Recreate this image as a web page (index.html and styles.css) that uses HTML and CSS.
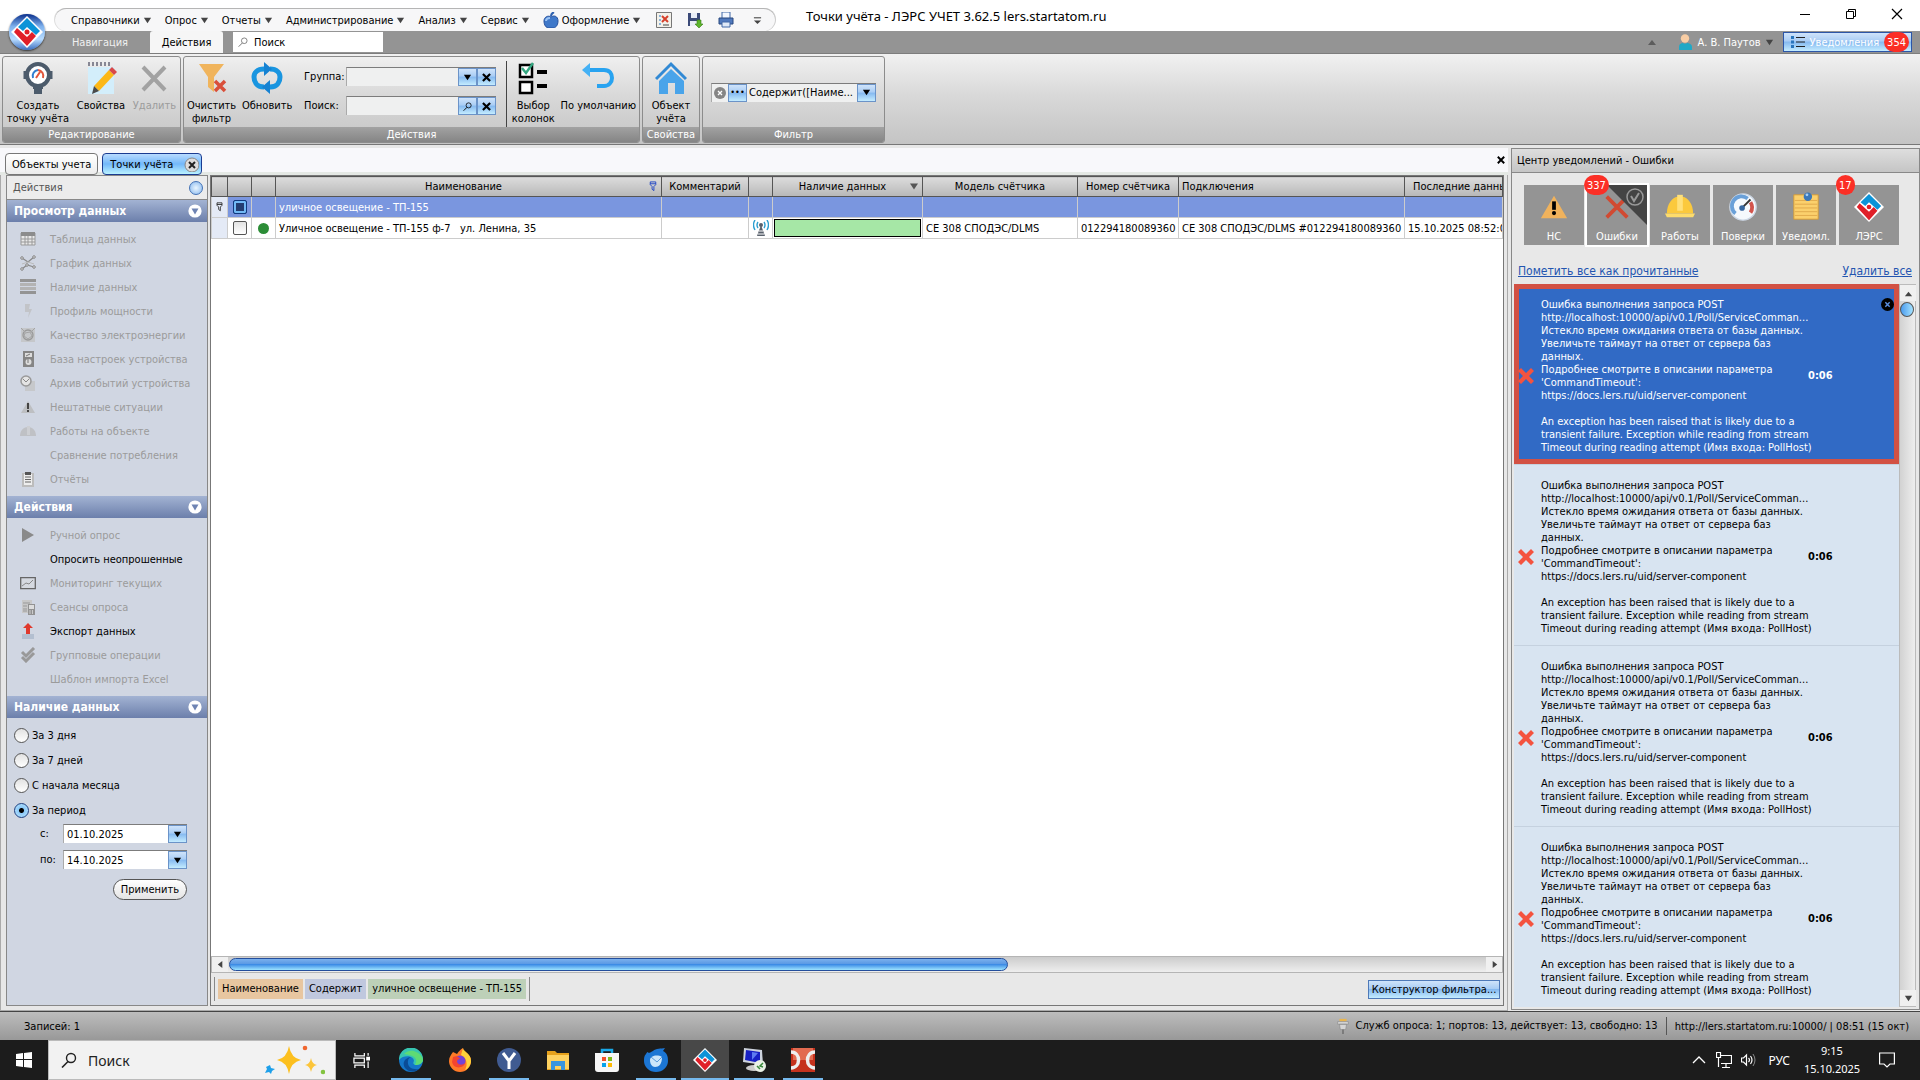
FILE: index.html
```html
<!DOCTYPE html>
<html lang="ru">
<head>
  <meta charset="UTF-8">
  <meta name="viewport" content="width=device-width, initial-scale=1.0">
  <title>Точки учёта - ЛЭРС УЧЕТ</title>
  <link rel="stylesheet" href="styles.css">
</head>
<body>
  <!-- Shared icons -->
  <svg class="defs" aria-hidden="true">
    <symbol id="i-lers" viewBox="0 0 32 32">
      <path d="M16 0 32 16 16 32 0 16z" fill="#fff"/>
      <path d="M16 2 29 15l-4 4-9-8-4 4-5-4z" fill="#0b93d8"/>
      <path d="M6 12l10 9 5-5 4 4-9 10L3 16z" fill="#e01f28"/>
      <circle cx="16" cy="16" r="2.500" fill="#e01f28"/>
    </symbol>
    <symbol id="i-cross" viewBox="0 0 16 16">
      <path d="M3 0l5 5 5-5 3 3-5 5 5 5-3 3-5-5-5 5-3-3 5-5-5-5z" fill="#f4533f"/>
    </symbol>
    <symbol id="i-x" viewBox="0 0 10 10"><path d="M1 1l8 8M9 1l-8 8" stroke="#000" stroke-width="2.400"/></symbol>
    <symbol id="i-down" viewBox="0 0 10 10"><path d="M1 2h8L5 8z" fill="currentColor"/></symbol>
    <symbol id="i-find" viewBox="0 0 16 16">
      <circle cx="10" cy="6" r="4.500" fill="none" stroke="currentColor" stroke-width="1.400"/>
      <path d="M7 9.500 1 15.500" stroke="currentColor" stroke-width="1.600"/>
    </symbol>
    <symbol id="i-fold" viewBox="0 0 14 14">
      <circle cx="7" cy="7" r="6.600" fill="#fff"/><path d="M3.500 4.500h7L7 10.500z" fill="#6f84b3"/>
    </symbol>
    <symbol id="i-pin" viewBox="0 0 8 12">
      <path d="M1 1h6v3L5 6v4.500L3 9V6L1 4zM1 3h6" fill="none" stroke="currentColor"/>
    </symbol>
    <symbol id="i-helmet" viewBox="0 0 32 26">
      <path d="M2 20C2 9 8 3 13 2h6c5 1 11 7 11 18z" fill="#fbc93d"/>
      <path d="M13 0h6v17h-6z" fill="#ffe07a"/><path d="M0 20h32l-2 4H2z" fill="#fddc6c"/>
    </symbol>
  </svg>

  <header class="titlebar">
    <nav class="quick-menu">
      <button>Справочники <svg><use href="#i-down"/></svg></button>
      <button>Опрос <svg><use href="#i-down"/></svg></button>
      <button>Отчеты <svg><use href="#i-down"/></svg></button>
      <button>Администрирование <svg><use href="#i-down"/></svg></button>
      <button>Анализ <svg><use href="#i-down"/></svg></button>
      <button>Сервис <svg><use href="#i-down"/></svg></button>
      <button class="apple-btn">
        <svg class="icon16" viewBox="0 0 16 16"><path d="M8 5c3-2 7-1 7 4s-3 7-5 7c-1 0-3 0-4 0-3 0-5-3-5-7s4-6 7-4z" fill="#3f78c9" stroke="#244f9c"/><path d="M3 9c0-2 2-3 4-3" stroke="#9cc4f5" stroke-width="2" fill="none"/><path d="M8 4c0-2 1-3 3-4" stroke="#2f62b0" stroke-width="2"/></svg>
        Оформление <svg><use href="#i-down"/></svg>
      </button>
      <button class="tool" aria-label="Настройка"><svg class="icon16" viewBox="0 0 16 16"><path d="M.5.5h15v15H.5z" fill="#f3f1ea" stroke="#777"/><path d="M3 3h2v2H3zM3 7h2v2H3zM3 11h2v2H3z" fill="#8ab3da"/><path d="M6 4l6 6M12 4l-6 6" stroke="#d5402b" stroke-width="2"/><path d="M7 13h6" stroke="#444"/></svg></button>
      <button class="tool" aria-label="Сохранить"><svg class="icon16" viewBox="0 0 16 16"><path d="M1 1h12v13H1z" fill="#3b4a78"/><path d="M4 1h6v5H4zM3 9h8v5H3z" fill="#e8edf6"/><path d="M10 8h4v4h2l-4 4-4-4h2z" fill="#5cb52c" stroke="#367a14" stroke-width=".6"/></svg></button>
      <button class="tool" aria-label="Печать"><svg class="icon16" viewBox="0 0 16 16"><path d="M4 0h8v7H4z" fill="#f4f8ff" stroke="#4168a8"/><path d="M1 6h14v6H1z" fill="#5079bd" stroke="#28487f"/><path d="M4 10h8v5H4z" fill="#dfe9f8" stroke="#4168a8"/></svg></button>
      <button class="tool more" aria-label="Ещё"><svg viewBox="0 0 10 10"><path d="M1 2h8" stroke="#444" stroke-width="1.200"/><path d="M1 5h8L5 9z" fill="#444"/></svg></button>
    </nav>
    <h1 class="window-title">Точки учёта - ЛЭРС УЧЕТ 3.62.5 lers.startatom.ru</h1>
    <div class="window-buttons">
      <button aria-label="Свернуть"><svg viewBox="0 0 12 12"><path d="M1 6.500h10" stroke="#000"/></svg></button>
      <button aria-label="Восстановить"><svg viewBox="0 0 12 12"><path d="M1.500 3.500h7v7h-7zM3.500 3.500v-2h7v7h-2" fill="none" stroke="#000"/></svg></button>
      <button aria-label="Закрыть"><svg viewBox="0 0 12 12"><path d="M1 1l10 10M11 1 1 11" stroke="#000" stroke-width="1.200"/></svg></button>
    </div>
    <button class="app-button" aria-label="ЛЭРС"><svg><use href="#i-lers"/></svg></button>
  </header>

  <div class="tabbar">
    <button class="tab">Навигация</button>
    <button class="tab active">Действия</button>
    <label class="tab-search"><svg><use href="#i-find"/></svg><input type="text" value="Поиск" aria-label="Поиск команды"></label>
    <div class="account">
      <svg class="up" viewBox="0 0 8 5"><path d="M4 0l4 5H0z" fill="#5c5c5c"/></svg>
      <button class="user">
        <svg class="icon16" viewBox="0 0 16 16"><circle cx="8" cy="4.500" r="4.200" fill="#f8cda4"/><path d="M2 16v-3c0-3 2-4 4-4 1 1 3 1 4 0 2 0 5 1 5 4v3z" fill="#20a8c6"/></svg>
        А. В. Паутов <svg class="caret"><use href="#i-down"/></svg>
      </button>
      <button class="notify-btn">
        <svg viewBox="0 0 14 12"><path d="M5 1.500h9M5 6h9M5 10.500h9" stroke="#222" stroke-width="1.200"/><path d="M0 0h3v3H0zM0 4.500h3v3H0zM0 9h3v3H0z" fill="#2a76bd"/></svg>
        Уведомления <span class="badge">354</span>
      </button>
    </div>
  </div>

  <div class="ribbon">
    <section class="group group-edit">
      <div class="group-body">
        <button class="cmd"><svg viewBox="0 0 32 32"><circle cx="16" cy="13" r="11" fill="#fff" stroke="#4c5b6b" stroke-width="4"/><path d="M3 9v8M29 9v8" stroke="#4c5b6b" stroke-width="3"/><path d="M11 24h10v3h-1v5h-8v-5h-1z" fill="#4c5b6b"/><path d="M11 16a6 6 0 0 1 5-8" fill="none" stroke="#2f7ed0" stroke-width="2"/><path d="M16 8a6 6 0 0 1 5 8M14 16l4-6" fill="none" stroke="#e2573c" stroke-width="2"/></svg>Создать<br>точку учёта</button>
        <button class="cmd"><svg viewBox="0 0 32 32"><path d="M3 5h26v27H3z" fill="#d3eefb"/><path d="M4 0v4M8 0v4M12 0v4M16 0v4M20 0v4M24 0v4" stroke="#667" stroke-width="1.500"/><path d="M9 24 24 8l5 5-15 16z" fill="#fcb817"/><path d="M24 8l3-3 5 5-3 3z" fill="#d94848"/><path d="M9 24l5 5-7 3z" fill="#4a4a4a"/></svg>Свойства</button>
        <button class="cmd" disabled><svg viewBox="0 0 32 32"><path d="M5 5l22 23M27 5 5 28" stroke="#a2a2a2" stroke-width="4"/></svg>Удалить</button>
      </div>
      <h2>Редактирование</h2>
    </section>
    <section class="group group-actions">
      <div class="group-body">
        <button class="cmd"><svg viewBox="0 0 32 32"><path d="M3 2h25L18 15v15l-6-5V15z" fill="#f0b45c"/><path d="M19 19l10 10M29 19 19 29" stroke="#d94f3a" stroke-width="3.500"/></svg>Очистить<br>фильтр</button>
        <button class="cmd"><svg viewBox="0 0 32 32"><path d="M13 25C5 25 3 19 3 15s3-8 10-8M19 7c7 0 10 4 10 8s-2 10-10 10" fill="none" stroke="#1995e0" stroke-width="5"/><path d="M13 0v14l8-7zM19 18v14l-8-7z" fill="#1682d2"/></svg>Обновить</button>
        <div class="lookup">
          <label for="group">Группа:</label>
          <div class="combo"><input id="group" type="text"><button aria-label="Выбрать"><svg><use href="#i-down"/></svg></button><button aria-label="Очистить"><svg><use href="#i-x"/></svg></button></div>
          <label for="find">Поиск:</label>
          <div class="combo"><input id="find" type="text"><button aria-label="Найти"><svg><use href="#i-find"/></svg></button><button aria-label="Сбросить"><svg><use href="#i-x"/></svg></button></div>
        </div>
        <button class="cmd columns"><svg viewBox="0 0 32 32"><path d="M3 3h12v12H3zM3 20h12v11H3z" fill="#fff" stroke="#000" stroke-width="2.500"/><path d="M20 8h10v4H20zM20 22h10v4H20z" fill="#000"/><path d="M5 6l4 5 7-10" fill="none" stroke="#35a781" stroke-width="2.500"/></svg>Выбор<br>колонок</button>
        <button class="cmd"><svg viewBox="0 0 32 32"><path d="M6 8h16c6 0 8 4 8 8s-3 8-8 8h-7" fill="none" stroke="#28a3f0" stroke-width="4"/><path d="M0 8l8-7v14z" fill="#44b1f5"/></svg>По умолчанию</button>
      </div>
      <h2>Действия</h2>
    </section>
    <section class="group group-props">
      <div class="group-body">
        <button class="cmd"><svg viewBox="0 0 32 32"><path d="M16 7 29 19v13h-9V21h-7v11H4V19z" fill="#49a4ea"/><path d="M1 17 16 2l15 15" fill="none" stroke="#3189d4" stroke-width="3"/></svg>Объект<br>учёта</button>
      </div>
      <h2>Свойства</h2>
    </section>
    <section class="group group-filter">
      <div class="group-body">
        <div class="combo filter-combo">
          <svg class="clear" viewBox="0 0 12 12"><circle cx="6" cy="6" r="6" fill="#858585"/><path d="M4 4l4 4M8 4 4 8" stroke="#fff" stroke-width="1.300"/></svg>
          <button aria-label="Изменить">•••</button>
          <input type="text" value="Содержит([Наиме..." aria-label="Фильтр">
          <button aria-label="Список"><svg><use href="#i-down"/></svg></button>
        </div>
      </div>
      <h2>Фильтр</h2>
    </section>
  </div>

  <main class="desktop">
    <div class="documents">
      <div class="doc-tabs">
        <button class="doc-tab">Объекты учета</button>
        <button class="doc-tab current">Точки учёта <svg viewBox="0 0 15 15"><circle cx="8" cy="8" r="7" fill="#ddd" stroke="#888"/><path d="M5 5l6 6M11 5l-6 6" stroke="#222" stroke-width="2"/></svg></button>
        <button class="close-doc" aria-label="Закрыть вкладку"><svg><use href="#i-x"/></svg></button>
      </div>

      <div class="workspace">
        <aside class="sidebar">
          <div class="side-title">Действия <span class="ball"></span></div>

          <h3>Просмотр данных <svg><use href="#i-fold"/></svg></h3>
          <ul class="side-list">
            <li><button disabled><svg viewBox="0 0 16 16"><path d="M1 2h14v12H1z" fill="#e9e9e9" stroke="#999"/><path d="M1 1h14v4H1z" fill="#8c8c8c"/><path d="M1 8h14M1 11h14M5 5v9M8 5v9M12 5v9" stroke="#999"/></svg>Таблица данных</button></li>
            <li><button disabled><svg viewBox="0 0 16 16"><path d="M2 3l6 4 6-5M2 14l5-4 7 2" fill="none" stroke="#888" stroke-width="1.200"/><path d="M2 9l6-2 6 2" fill="none" stroke="#bbb"/><g fill="#ddd" stroke="#888"><circle cx="2" cy="3" r="1.300"/><circle cx="14" cy="2" r="1.300"/><circle cx="2" cy="14" r="1.300"/><circle cx="7" cy="10" r="1.300"/><circle cx="14" cy="12" r="1.300"/></g></svg>График данных</button></li>
            <li><button disabled><svg viewBox="0 0 16 16"><path d="M0 0h16v3H0zM0 12h16v3H0z" fill="#949494"/><path d="M0 4h16v3H0zM0 8h16v3H0z" fill="#b3b3b3"/></svg>Наличие данных</button></li>
            <li><button disabled><svg viewBox="0 0 16 16"><path d="M5 1h5L9 6h3L8 15l1-6H5z" fill="#c2c4c8"/></svg>Профиль мощности</button></li>
            <li><button disabled><svg viewBox="0 0 16 16"><path d="M1 1h14v14H1z" fill="#c5c7ca"/><circle cx="8" cy="8" r="5" fill="none" stroke="#999" stroke-width="1.300"/><path d="M5 6l5-1 2 4-4 3-4-3zM1 1l4 4M15 1l-4 4" fill="none" stroke="#a4a4a4"/></svg>Качество электроэнергии</button></li>
            <li><button disabled><svg viewBox="0 0 16 16"><path d="M3 0h11v16H3z" fill="#858585"/><path d="M5 2h7v4H5z" fill="#ddd"/><circle cx="8.500" cy="11" r="3" fill="#ddd"/><path d="M8 8v4M6 5l4-2" stroke="#777"/></svg>База настроек устройства</button></li>
            <li><button disabled><svg viewBox="0 0 16 16"><path d="M5 6h10v10H5z" fill="#c6c8cb"/><circle cx="6" cy="6" r="5" fill="#e4e4e4" stroke="#999" stroke-width="1.500"/><path d="M3 4l3 3 3-3" fill="none" stroke="#888"/></svg>Архив событий устройства</button></li>
            <li><button disabled><svg viewBox="0 0 16 16"><path d="M8 2l7 12H1z" fill="#bdbfc2"/><path d="M7 4h2v6H7zM7 11h2v2H7z" fill="#444"/></svg>Нештатные ситуации</button></li>
            <li><button disabled><svg viewBox="0 0 16 16"><path d="M0 13c0-6 4-9 8-9s8 3 8 9z" fill="#bfc1c5"/><path d="M7 3h3v9H7z" fill="#cdcfd3"/></svg>Работы на объекте</button></li>
            <li><button disabled><svg viewBox="0 0 16 16"></svg>Сравнение потребления</button></li>
            <li><button disabled><svg viewBox="0 0 16 16"><path d="M2 2h12v14H2z" fill="#bcbcbc"/><path d="M4 3h8v11H4z" fill="#eee"/><path d="M5 1h6v3H5z" fill="#555"/><path d="M5 6h6M5 8.500h6M5 11h6" stroke="#666"/></svg>Отчёты</button></li>
          </ul>

          <h3>Действия <svg><use href="#i-fold"/></svg></h3>
          <ul class="side-list">
            <li><button disabled><svg viewBox="0 0 16 16"><path d="M2 1l12 7-12 7z" fill="#8a8a8a"/></svg>Ручной опрос</button></li>
            <li><button><svg viewBox="0 0 16 16"></svg>Опросить неопрошенные</button></li>
            <li><button disabled><svg viewBox="0 0 16 16"><path d="M.7 2.700h14.600v11H.7z" fill="#d5d9e0" stroke="#666" stroke-width="1.300"/><path d="M2 11l4-3 3 1 4-4" fill="none" stroke="#888"/></svg>Мониторинг текущих</button></li>
            <li><button disabled><svg viewBox="0 0 16 16"><path d="M2 1h10v13H2z" fill="#c8c8c8"/><path d="M3 4h7M3 7h4M3 10h4M3 12h4" stroke="#999"/><path d="M8 5h7v11H8z" fill="#929292"/><path d="M9 6h5v4H9z" fill="#ddd"/><path d="M10 11v4M12.500 11v4" stroke="#ccc"/></svg>Сеансы опроса</button></li>
            <li><button><svg viewBox="0 0 16 16"><path d="M2 11h12v5H2z" fill="#b3bfd0"/><path d="M8 0l5 5h-3v6H6V5H3z" fill="#e0392d"/></svg>Экспорт данных</button></li>
            <li><button disabled><svg viewBox="0 0 16 16"><path d="M2 5l4 4 8-8M2 10l4 4 8-8" fill="none" stroke="#999" stroke-width="3"/></svg>Групповые операции</button></li>
            <li><button disabled><svg viewBox="0 0 16 16"></svg>Шаблон импорта Excel</button></li>
          </ul>

          <h3>Наличие данных <svg><use href="#i-fold"/></svg></h3>
          <form class="period">
            <label class="radio"><input type="radio" name="period">За 3 дня</label>
            <label class="radio"><input type="radio" name="period">За 7 дней</label>
            <label class="radio"><input type="radio" name="period">С начала месяца</label>
            <label class="radio"><input type="radio" name="period" checked>За период</label>
            <div class="date-row"><label for="from">с:</label><div class="combo date"><input id="from" type="text" value="01.10.2025"><button type="button" aria-label="Календарь"><svg><use href="#i-down"/></svg></button></div></div>
            <div class="date-row"><label for="to">по:</label><div class="combo date"><input id="to" type="text" value="14.10.2025"><button type="button" aria-label="Календарь"><svg><use href="#i-down"/></svg></button></div></div>
            <button class="apply" type="button">Применить</button>
          </form>
        </aside>

        <section class="grid-panel">
          <div class="grid-scroll">
            <table class="grid">
              <colgroup>
                <col class="c-mark"><col class="c-icon"><col class="c-icon"><col class="c-name"><col class="c-comment"><col class="c-icon"><col class="c-data"><col class="c-model"><col class="c-number"><col class="c-conn"><col class="c-last">
              </colgroup>
              <thead>
                <tr>
                  <th></th><th></th><th></th>
                  <th><div class="th-box">Наименование<svg class="pin"><use href="#i-pin"/></svg></div></th>
                  <th>Комментарий</th><th></th>
                  <th><div class="th-box">Наличие данных<svg class="sort"><use href="#i-down"/></svg></div></th>
                  <th>Модель счётчика</th><th>Номер счётчика</th><th class="left">Подключения</th><th class="last">Последние данные</th>
                </tr>
              </thead>
              <tbody>
                <tr class="filter-row">
                  <td class="mark"><svg><use href="#i-pin"/></svg></td>
                  <td class="check"><input type="checkbox" class="mixed" aria-label="Все строки"></td>
                  <td></td><td>уличное освещение - ТП-155</td><td></td><td></td><td></td><td></td><td></td><td></td><td></td>
                </tr>
                <tr>
                  <td class="mark"></td>
                  <td class="check"><input type="checkbox" aria-label="Выбрать строку"></td>
                  <td class="check"><span class="dot"></span></td>
                  <td>Уличное освещение - ТП-155 ф-7 &nbsp; ул. Ленина, 35</td>
                  <td></td>
                  <td class="check"><svg class="antenna" viewBox="0 0 16 16"><path d="M8 5l4 11H4z" fill="#59616c"/><path d="M6 11h4M5 14h6" stroke="#fff"/><circle cx="8" cy="5" r="2" fill="#59616c"/><path d="M5 2q-2 3 0 6M2 0Q-1 5 2 10M11 2q2 3 0 6M14 0q3 5 0 10" fill="none" stroke="#2b9ed0" stroke-width="1.400"/></svg></td>
                  <td class="bar-cell"><div class="bar"></div></td>
                  <td>СЕ 308 СПОДЭС/DLMS</td>
                  <td>012294180089360</td>
                  <td>СЕ 308 СПОДЭС/DLMS #012294180089360</td>
                  <td>15.10.2025 08:52:00</td>
                </tr>
              </tbody>
            </table>
          </div>
          <div class="hscroll">
            <button aria-label="Влево"><svg viewBox="0 0 10 10"><path d="M7 1v8L2 5z" fill="#444"/></svg></button>
            <div class="track"><div class="thumb"></div></div>
            <button aria-label="Вправо"><svg viewBox="0 0 10 10"><path d="M3 1v8l5-4z" fill="#444"/></svg></button>
          </div>
          <div class="filter-bar">
            <div class="tokens">
              <span class="token field">Наименование</span>
              <span class="token op">Содержит</span>
              <span class="token val">уличное освещение - ТП-155</span>
            </div>
            <button class="builder">Конструктор фильтра...</button>
          </div>
        </section>
      </div>
    </div>

    <aside class="center">
      <h2 class="center-title">Центр уведомлений - Ошибки</h2>
      <div class="tiles">
        <button class="tile"><svg viewBox="0 0 32 32"><path d="M16 4l14 24H2z" fill="#f0b25c"/><path d="M14 10h4v9h-4z"/><circle cx="16" cy="22.500" r="2.200"/></svg>НС</button>
        <button class="tile selected"><svg class="corner" viewBox="0 0 40 40"><path d="M0 0h40v40z" fill="#444"/><circle cx="28" cy="12" r="8" fill="none" stroke="#999" stroke-width="1.500"/><path d="M24 11l3 5 5-8" fill="none" stroke="#999" stroke-width="2"/></svg><svg viewBox="0 0 32 32"><path d="M5 5l22 22M27 5 5 27" stroke="#d14a32" stroke-width="4"/></svg>Ошибки<span class="badge">337</span></button>
        <button class="tile"><svg><use href="#i-helmet"/></svg>Работы</button>
        <button class="tile"><svg viewBox="0 0 32 32"><circle cx="16" cy="16" r="14" fill="#f5f9fd" stroke="#ccd7e5" stroke-width="1.500"/><path d="M8 23a10 10 0 0 1 13-16" fill="none" stroke="#6aa0d8" stroke-width="4"/><path d="M24 11a10 10 0 0 1 0 11" fill="none" stroke="#d2544d" stroke-width="4"/><path d="M15 17l9-9" stroke="#333" stroke-width="2"/><circle cx="15" cy="17" r="3" fill="#3566a0"/></svg>Поверки</button>
        <button class="tile"><svg viewBox="0 0 32 32"><path d="M3 3h26v26H3z" fill="#fbd06c" stroke="#d49a37"/><path d="M4 9h24M4 13h24M4 17h24M4 21h24M4 25h24" stroke="#e0a94b"/><circle cx="18" cy="5" r="4.500" fill="#3c78b8"/><circle cx="17" cy="3" r="1.500" fill="#a6cff5"/></svg>Уведомл.</button>
        <button class="tile"><svg><use href="#i-lers"/></svg>ЛЭРС<span class="badge">17</span></button>
      </div>
      <div class="center-links"><a href="#read">Пометить все как прочитанные</a><a href="#clear">Удалить все</a></div>
      <div class="feed">
        <div class="messages">
          <article class="message current">
            <svg class="err"><use href="#i-cross"/></svg>
            <p>Ошибка выполнения запроса POST
http://localhost:10000/api/v0.1/Poll/ServiceComman...
Истекло время ожидания ответа от базы данных.
Увеличьте таймаут на ответ от сервера баз
данных.
Подробнее смотрите в описании параметра
'CommandTimeout':
https://docs.lers.ru/uid/server-component

An exception has been raised that is likely due to a
transient failure. Exception while reading from stream
Timeout during reading attempt (Имя входа: PollHost)</p>
            <time>0:06</time>
            <button class="dismiss" aria-label="Удалить"><svg viewBox="0 0 12 12"><circle cx="6" cy="6" r="6"/><path d="M4 4l4 4M8 4 4 8" stroke="#5b8fe0" stroke-width="1.300"/></svg></button>
          </article>
          <article class="message">
            <svg class="err"><use href="#i-cross"/></svg>
            <p>Ошибка выполнения запроса POST
http://localhost:10000/api/v0.1/Poll/ServiceComman...
Истекло время ожидания ответа от базы данных.
Увеличьте таймаут на ответ от сервера баз
данных.
Подробнее смотрите в описании параметра
'CommandTimeout':
https://docs.lers.ru/uid/server-component

An exception has been raised that is likely due to a
transient failure. Exception while reading from stream
Timeout during reading attempt (Имя входа: PollHost)</p>
            <time>0:06</time>
          </article>
          <article class="message">
            <svg class="err"><use href="#i-cross"/></svg>
            <p>Ошибка выполнения запроса POST
http://localhost:10000/api/v0.1/Poll/ServiceComman...
Истекло время ожидания ответа от базы данных.
Увеличьте таймаут на ответ от сервера баз
данных.
Подробнее смотрите в описании параметра
'CommandTimeout':
https://docs.lers.ru/uid/server-component

An exception has been raised that is likely due to a
transient failure. Exception while reading from stream
Timeout during reading attempt (Имя входа: PollHost)</p>
            <time>0:06</time>
          </article>
          <article class="message">
            <svg class="err"><use href="#i-cross"/></svg>
            <p>Ошибка выполнения запроса POST
http://localhost:10000/api/v0.1/Poll/ServiceComman...
Истекло время ожидания ответа от базы данных.
Увеличьте таймаут на ответ от сервера баз
данных.
Подробнее смотрите в описании параметра
'CommandTimeout':
https://docs.lers.ru/uid/server-component

An exception has been raised that is likely due to a
transient failure. Exception while reading from stream
Timeout during reading attempt (Имя входа: PollHost)</p>
            <time>0:06</time>
          </article>
        </div>
        <div class="vscroll">
          <button aria-label="Вверх"><svg viewBox="0 0 10 10"><path d="M1 8h8L5 3z" fill="#444"/></svg></button>
          <div class="vtrack"><div class="vthumb"></div></div>
          <button aria-label="Вниз"><svg viewBox="0 0 10 10"><path d="M1 2h8L5 8z" fill="#444"/></svg></button>
        </div>
      </div>
    </aside>
  </main>

  <footer class="statusbar">
    <span>Записей: 1</span>
    <span class="services"><svg viewBox="0 0 14 18"><path d="M3 1h8v3H3z" fill="#eab54d"/><path d="M1 4h12v3H1zM3 7h8l-1 6H4z" fill="#d5d5d5" stroke="#888" stroke-width=".7"/><path d="M7 13v5" stroke="#777" stroke-width="2"/></svg>Служб опроса: 1; портов: 13, действует: 13, свободно: 13</span>
    <span class="server">http://lers.startatom.ru:10000/ | 08:51 (15 окт)</span>
  </footer>

  <div class="taskbar">
    <button class="start" aria-label="Пуск"><svg viewBox="0 0 16 16"><path d="M0 2l7-1v6H0zM8 1l8-1v7H8zM0 8h7v7l-7-1zM8 8h8v8l-8-1z" fill="#fff"/></svg></button>
    <label class="task-search">
      <svg class="lens"><use href="#i-find"/></svg>
      <input type="text" value="Поиск" aria-label="Поиск в Windows">
      <svg class="spark" viewBox="0 0 60 30"><path d="M24 1q2 12 12 14-10 2-12 14-2-12-12-14Q22 13 24 1z" fill="#fcbf1e"/><path d="M46 13q1 6 6 7-5 1-6 7-1-6-6-7 5-1 6-7z" fill="#fcc53a"/><path d="M5 20l1 3 4 1-3 2-1 3-2-2-4 1 2-4-1-2z" fill="#1ea0ea"/><circle cx="40" cy="3" r="2.300" fill="#f0662f"/><circle cx="58" cy="27" r="2.300" fill="#83c341"/></svg>
    </label>
    <div class="apps">
      <button class="app view" aria-label="Представление задач"><svg viewBox="0 0 18 18"><path d="M2 1v3h10V1M2 17v-3h10v3M1 6.500h11v5H1zM16 1v3M16 10v7" fill="none" stroke="#fff" stroke-width="1.300"/><path d="M14 5h4v4h-4z" fill="#fff"/></svg></button>
      <button class="app open" aria-label="Edge"><svg viewBox="0 0 24 24"><circle cx="12" cy="12" r="12" fill="#1476c8"/><path d="M0 12A12 12 0 0 1 24 11c0 5-4 6-8 6-2-1-2-2-1-4 0-5-10-7-15-1z" fill="#38c5b0"/><path d="M5 6c4-4 9-4 12-2 5 2 7 6 7 8 0 3-4 5-8 5 4-7-2-10-11-11z" fill="#5edb74"/><path d="M9 13c-1 6 4 9 11 8-3 3-10 4-14-1-3-4-1-10 6-11-2 1-3 2-3 4z" fill="#0a4c96"/></svg></button>
      <button class="app" aria-label="Firefox"><svg viewBox="0 0 24 24"><path d="M5 4l4 2c2-3 3-4 6-6 0 4 8 5 8 13a11 11 0 0 1-22 0C1 9 3 7 5 4z" fill="#ff7a27"/><path d="M15 0c0 4 8 5 8 13 0 4-3 8-6 9 3-5 2-12-4-15z" fill="#ffd23a"/><circle cx="12" cy="13" r="5.500" fill="#7443d6"/><path d="M5 9c4-2 6 0 7 2-2 0-3 1-3 3 2 4 6 3 8 1-1 5-11 7-13-1z" fill="#f4452f"/></svg></button>
      <button class="app open" aria-label="Яндекс"><svg viewBox="0 0 24 24"><circle cx="12" cy="12" r="12" fill="#405b91"/><path d="M6 5l6 8 6-8M12 12v9" fill="none" stroke="#fff" stroke-width="3"/></svg></button>
      <button class="app" aria-label="Проводник"><svg viewBox="0 0 24 24"><path d="M1 3h8l2 2h12v17H1z" fill="#e6a11c"/><path d="M1 7h22v14H1z" fill="#fed160"/><path d="M5 13h14v9h-4v-4H9v4H5z" fill="#3995df"/></svg></button>
      <button class="app" aria-label="Магазин"><svg viewBox="0 0 24 24"><path d="M7 6V2h10v4" fill="none" stroke="#19a9e8" stroke-width="2.500"/><path d="M0 5h24v16q0 3-3 3H3q-3 0-3-3z" fill="#f6f6f6"/><path d="M7 9h4v4H7z" fill="#ef5029"/><path d="M13 9h4v4h-4z" fill="#7fbb18"/><path d="M7 15h4v4H7z" fill="#04a2ec"/><path d="M13 15h4v4h-4z" fill="#feb804"/></svg></button>
      <button class="app open" aria-label="Thunderbird"><svg viewBox="0 0 24 24"><path d="M2 6c1-2 2-2 2-2 0 2 3 0 5-1C12 0 17 1 21 0l-2 3c4 2 5 5 5 10a12 11 0 0 1-24 0c0-3 0-5 2-7z" fill="#1c76d4"/><path d="M6 12c0-4 7-6 12-3 0 7-3 10-7 10-3 0-5-3-5-7z" fill="#cce6fa"/><path d="M7 9l6 5 5-5" fill="none" stroke="#5c9bd9"/></svg></button>
      <button class="app open focused" aria-label="ЛЭРС УЧЕТ"><svg><use href="#i-lers"/></svg></button>
      <button class="app open" aria-label="Удалённый рабочий стол"><svg viewBox="0 0 24 24"><path d="M2 0l18 2 1 15-20-3z" fill="#cdd3dd"/><path d="M4 2l14 2v11L3 12z" fill="#1720c4"/><path d="M10 4l6 1-6 7z" fill="#5d7cf0"/><ellipse cx="12" cy="20" rx="8" ry="3" fill="#ccc"/><circle cx="18" cy="18" r="6" fill="#eaf1e6"/><path d="M15 18l3 3M21 15l-3 3 3 1" fill="none" stroke="#38883b" stroke-width="1.500"/></svg></button>
      <button class="app open" aria-label="Конфигуратор"><svg viewBox="0 0 24 24"><path d="M0 0h24v24H0z" fill="#c5321d"/><path d="M2 0h20v12H2z" fill="#e26a50"/><path d="M0 4c10 0 10 16 0 16M24 4c-10 0-10 16 0 16" fill="none" stroke="#eee" stroke-width="3.500"/></svg></button>
    </div>
    <div class="tray">
      <svg viewBox="0 0 16 16"><path d="M2 11l6-6 6 6" fill="none" stroke="#fff" stroke-width="1.300"/></svg>
      <svg viewBox="0 0 16 16"><path d="M4 3.500h11.500v8H5M10 12v3M6 15.500h8M.5.500h4v5h-4zM2.500 6v9" fill="none" stroke="#fff" stroke-width="1.200"/></svg>
      <svg viewBox="0 0 16 16"><path d="M.5 6h2l3-3v10l-3-3h-2zM7.500 6q2 2 0 4M9.500 4q3 4 0 8" fill="none" stroke="#fff" stroke-width="1.200"/><path d="M12 2q4 6 0 12" fill="none" stroke="#888"/></svg>
      <span>РУС</span>
      <div class="clock"><span>9:15</span><span>15.10.2025</span></div>
      <svg class="note" viewBox="0 0 16 16"><path d="M.6 1h14.800v11H11l-3 3-3-3H.6z" fill="none" stroke="#fff" stroke-width="1.200"/></svg>
    </div>
  </div>
</body>
</html>
```
FILE: styles.css
```css
:root {
  --ui: "DejaVu Sans Condensed", "Noto Sans", sans-serif;
  --win: "Noto Sans", "Open Sans", sans-serif;
  --blue-btn: linear-gradient(#cfe3fa 0%, #a9cdf5 45%, #85b9f0 50%, #c4ecff 100%);
}

* {
  box-sizing: border-box;
}

body {
  margin: 0;
  height: 100vh;
  display: flex;
  flex-direction: column;
  overflow: hidden;
  font: 11px/13px var(--ui);
  color: #000;
  background: #e7e7e7;
}

button, input {
  font: inherit;
  color: inherit;
  padding: 0;
  margin: 0;
  border: 0;
  background: none;
}

h1, h2, h3, p, ul {
  margin: 0;
  padding: 0;
  font-size: 11px;
  font-weight: normal;
}

svg {
  display: block;
  flex: none;
}

.defs {
  position: absolute;
  width: 0;
  height: 0;
}

.icon16 {
  width: 16px;
  height: 16px;
}

.badge {
  display: flex;
  align-items: center;
  height: 20px;
  padding: 0 3px;
  border-radius: 10px;
  background: #fb2f26;
  color: #fff;
}

/* Title bar */
.titlebar {
  position: relative;
  display: flex;
  flex: none;
  height: 31px;
  background: #fff;
}

.quick-menu {
  display: flex;
  align-items: center;
  gap: 13px;
  width: 720px;
  height: 23px;
  margin: 8px 0 0 55px;
  padding-left: 16px;
  border-top: 1px solid #b5b5b5;
  border-radius: 12px;
  background: #f7f7f8;
  box-shadow: 1px 0 0 #ccc, -1px 0 0 #ddd;
}

.quick-menu button {
  display: flex;
  align-items: center;
  gap: 3px;
  white-space: nowrap;
}

.quick-menu svg:not(.icon16) {
  width: 9px;
  height: 9px;
  color: #444;
}

.quick-menu .tool {
  margin-left: 2px;
}

.quick-menu .more {
  margin-left: 6px;
}

.window-title {
  flex: 1;
  padding-left: 31px;
  font: 13px/32px var(--win);
}

.window-buttons {
  display: flex;
}

.window-buttons button {
  width: 46px;
  height: 28px;
  display: grid;
  place-items: center;
}

.window-buttons svg {
  width: 12px;
  height: 12px;
}

.app-button {
  position: absolute;
  z-index: 2;
  left: 9px;
  top: 14px;
  width: 36px;
  height: 36px;
  display: grid;
  place-items: center;
  border-radius: 50%;
  background: linear-gradient(#0a2f8c, #7fb2ee 35%, #b8dcff 70%, #3c6fc0);
  box-shadow: 0 1px 2px #333;
}

.app-button svg {
  width: 32px;
  height: 32px;
}

/* Ribbon tabs */
.tabbar {
  display: flex;
  flex: none;
  align-items: center;
  height: 23px;
  padding-left: 50px;
  background: #949494;
  border-bottom: 1px solid #7d7d7d;
}

.tab {
  width: 100px;
  height: 22px;
  color: #f0f0f0;
}

.tab.active {
  width: 73px;
  color: #000;
  background: #f6f6f6;
  border-radius: 3px 3px 0 0;
}

.tab-search {
  display: flex;
  align-items: center;
  gap: 6px;
  width: 150px;
  height: 20px;
  margin-left: 10px;
  padding-left: 5px;
  background: #fff;
  color: #777;
}

.tab-search svg {
  width: 10px;
  height: 10px;
}

.tab-search input {
  width: 110px;
  color: #000;
}

.account {
  display: flex;
  align-items: center;
  margin-left: auto;
  padding-right: 8px;
  color: #fff;
}

.up {
  width: 8px;
  height: 5px;
}

.user {
  display: flex;
  align-items: center;
  gap: 4px;
  margin: 0 9px 0 21px;
}

.caret {
  width: 9px;
  height: 9px;
  color: #444;
}

.notify-btn {
  display: flex;
  align-items: center;
  gap: 5px;
  height: 20px;
  padding: 0 2px 0 7px;
  border: 1px solid #2c56a8;
  background: var(--blue-btn);
}

.notify-btn svg {
  width: 14px;
  height: 12px;
}

/* Ribbon */
.ribbon {
  display: flex;
  flex: none;
  gap: 2px;
  height: 91px;
  padding: 2px 2px 1px;
  background: linear-gradient(#f1f1f1, #d9d9d9 45%, #c4c4c4);
  border-bottom: 1px solid #777;
}

.group {
  display: flex;
  flex-direction: column;
  border: 1px solid #8c8c8c;
  border-radius: 3px;
  overflow: hidden;
}

.group-edit { width: 179px; }
.group-actions { width: 457px; }
.group-props { width: 58px; }
.group-filter { width: 183px; }

.group-body {
  display: flex;
  flex: 1;
  align-items: stretch;
  justify-content: space-around;
}

.group h2 {
  height: 15px;
  line-height: 15px;
  text-align: center;
  color: #fff;
  background: linear-gradient(#a2a2a2, #858585);
}

.cmd {
  display: block;
  padding-top: 4px;
  text-align: center;
  white-space: nowrap;
  align-self: flex-start;
}

.cmd svg {
  width: 32px;
  height: 34px;
  margin: 0 auto 4px;
}

.cmd:disabled {
  color: #9c9c9c;
}

.lookup {
  display: grid;
  grid-template-columns: 42px 150px;
  gap: 10px 0;
  align-content: center;
  align-items: center;
  padding: 0 4px 2px 6px;
}

.combo {
  display: flex;
  height: 19px;
  border-top: 1px solid #7c7c7c;
  border-left: 1px solid #aaa;
  background: #eff0f0;
}

.combo input {
  flex: 1;
  min-width: 0;
}

.combo button {
  flex: none;
  width: 19px;
  display: grid;
  place-items: center;
  border: 1px solid #6b93c8;
  background: var(--blue-btn);
}

.combo button svg {
  width: 9px;
  height: 9px;
}

.columns {
  border-left: 1px solid #444;
  padding-left: 5px;
  margin-top: 4px;
  padding-top: 0;
  padding-bottom: 2px;
}

.group-filter .group-body {
  align-items: center;
}

.filter-combo {
  width: 165px;
  align-items: center;
  gap: 2px;
}

.filter-combo button {
  height: 18px;
  font-size: 9px;
}

.clear {
  width: 12px;
  height: 12px;
  margin-left: 2px;
}

/* Documents */
.desktop {
  display: flex;
  flex: 1;
  gap: 3px;
  min-height: 0;
  padding-top: 3px;
  border-bottom: 1px solid #444;
}

.documents {
  display: flex;
  flex: 1;
  flex-direction: column;
  min-width: 0;
}

.doc-tabs {
  display: flex;
  flex: none;
  align-items: flex-end;
  gap: 4px;
  height: 27px;
  padding-left: 5px;
  background: linear-gradient(#f8f8fb 24px, #e4e8e4 24px);
}

.doc-tab {
  height: 22px;
  padding: 0 6px;
  border: 1px solid #777;
  border-radius: 4px;
  background: linear-gradient(#fff, #ececec);
}

.doc-tab.current {
  display: flex;
  align-items: center;
  gap: 11px;
  padding: 0 2px 0 7px;
  border-color: #1b3c91;
  background: linear-gradient(#b9dbff, #73b8fa 50%, #baf2ff);
}

.doc-tab svg {
  width: 15px;
  height: 15px;
}

.close-doc {
  margin: 0 3px 11px auto;
}

.close-doc svg {
  width: 8px;
  height: 8px;
}

.workspace {
  display: flex;
  flex: 1;
  gap: 2px;
  min-height: 0;
  padding: 0 3px 4px 5px;
  border: 1px solid #aaa;
  border-top: 0;
}

.sidebar {
  flex: none;
  width: 202px;
  border: 1px solid #888;
  background: #d0d6e2;
}

.side-title {
  display: flex;
  align-items: center;
  justify-content: space-between;
  height: 24px;
  padding: 0 4px 0 6px;
  color: #555;
  background: #ececec;
  border-bottom: 1px solid #888;
}

.ball {
  width: 14px;
  height: 14px;
  border: 1px solid #4472b5;
  border-radius: 50%;
  background: radial-gradient(#eaf6ff, #86b7ee);
}

.sidebar h3 {
  display: flex;
  align-items: center;
  justify-content: space-between;
  height: 22px;
  padding: 0 5px 0 7px;
  font-size: 12px;
  font-weight: bold;
  color: #fff;
  background: linear-gradient(#a3b3d3, #6c7fab);
}

.sidebar h3 svg {
  width: 14px;
  height: 14px;
}

.side-list {
  list-style: none;
  padding: 5px 0 5px 13px;
}

.side-list button {
  display: flex;
  align-items: center;
  gap: 14px;
  height: 24px;
}

.side-list button:disabled {
  color: #9b9b9b;
}

.side-list svg {
  width: 16px;
  height: 16px;
}

.period {
  display: flex;
  flex-direction: column;
  gap: 7px;
  padding: 8px 20px 0 7px;
}

.radio {
  display: flex;
  align-items: center;
  gap: 3px;
  height: 18px;
}

.radio input {
  appearance: none;
  width: 15px;
  height: 15px;
  border: 1px solid #555;
  border-radius: 50%;
  background: linear-gradient(#e2e2e2, #fff);
}

.radio input:checked {
  border-color: #1d3f80;
  background: radial-gradient(#000 2px, #8cc9f8 3px, #bfe8ff);
}

.radio:nth-child(4) {
  margin-bottom: -2px;
}

.date-row {
  display: flex;
  align-items: center;
  justify-content: space-between;
  padding-left: 26px;
}

.date {
  width: 124px;
  background: #fff;
}

.date input {
  padding-left: 3px;
}

.apply {
  align-self: flex-end;
  height: 21px;
  margin-top: 3px;
  padding: 0 7px;
  border: 1px solid #555;
  border-radius: 11px;
  background: linear-gradient(#fff, #e4e4e4);
}

/* Grid */
.grid-panel {
  display: flex;
  flex: 1;
  flex-direction: column;
  min-width: 0;
  border: 1px solid #777;
  background: #fff;
}

.grid-scroll {
  flex: 1;
  overflow: hidden;
}

.grid {
  width: 100%;
  table-layout: fixed;
  border-collapse: collapse;
}

.c-mark { width: 16px; }
.c-icon { width: 24px; }
.c-name { width: 386px; }
.c-comment { width: 87px; }
.c-data { width: 150px; }
.c-model { width: 155px; }
.c-number { width: 101px; }
.c-conn { width: 226px; }

.grid th, .grid td {
  height: 21px;
  padding: 0 3px;
  overflow: hidden;
  white-space: nowrap;
  text-align: left;
  font-weight: normal;
  border: 1px solid #ccc;
}

.grid th {
  height: 20px;
  text-align: center;
  border-color: #555;
  background: linear-gradient(#dcdcdc, #b7b7b7);
}

.grid th.left {
  text-align: left;
}

.grid th.last {
  padding: 0 0 0 8px;
  text-align: left;
}

.th-box {
  display: flex;
  align-items: center;
  justify-content: center;
}

.th-box svg {
  width: 10px;
  height: 11px;
  margin-left: auto;
}

.th-box::before {
  content: "";
  margin-right: auto;
}

.pin {
  color: #1d43c4;
}

.sort {
  color: #555;
}

.filter-row td {
  color: #fff;
  background: #7a96df;
}

.grid .mark {
  padding: 0 3px;
  color: #222;
  background: #e4eaf6;
}

.mark svg {
  width: 9px;
  height: 10px;
}

.grid .check {
  padding: 0;
}

.check > * {
  display: block;
  margin: 0 auto;
}

.check input {
  appearance: none;
  width: 14px;
  height: 14px;
  border: 1px solid #555;
  border-radius: 2px;
  background: linear-gradient(#e3e3e3, #fff);
}

.check .mixed {
  border-color: #113a80;
  background: #233c70;
  box-shadow: inset 0 0 0 2px #72b9f5;
}

.dot {
  width: 11px;
  height: 11px;
  border-radius: 50%;
  background: #2c8d37;
}

.antenna {
  width: 16px;
  height: 16px;
}

.grid .bar-cell {
  padding: 0 1px;
}

.bar {
  height: 18px;
  border: 1px solid #000;
  background: #a6e7a6;
}

.hscroll {
  display: flex;
  flex: none;
  height: 17px;
  border: 1px solid #b5b5b5;
  background: linear-gradient(#ccc, #eee);
}

.hscroll button, .vscroll button {
  display: grid;
  place-items: center;
  flex: none;
  width: 16px;
  background: #f0f0f0;
}

.hscroll svg, .vscroll svg {
  width: 9px;
  height: 9px;
}

.track {
  flex: 1;
  padding: 1px;
}

.thumb {
  width: 62%;
  height: 13px;
  border: 1px solid #244e9c;
  border-radius: 7px;
  background: linear-gradient(#7bb0ed, #5a99e4 45%, #3d8ce6 50%, #9de4ff);
}

.filter-bar {
  display: flex;
  flex: none;
  align-items: center;
  justify-content: space-between;
  height: 32px;
  padding: 0 3px;
  background: #e8e8e8;
}

.tokens {
  display: flex;
  gap: 2px;
  padding: 2px 3px;
  border: 1px solid #888;
  border-width: 0 1px;
}

.token {
  height: 20px;
  padding: 0 4px;
  line-height: 20px;
}

.field { background: #e8c6a0; }
.op { background: #c0c8de; }
.val { background: #bdd0b8; }

.builder {
  height: 19px;
  width: 132px;
  white-space: nowrap;
  border: 1px solid #4e79b8;
  background: var(--blue-btn);
}

/* Notification center */
.center {
  display: flex;
  flex: none;
  flex-direction: column;
  width: 409px;
  margin-bottom: 1px;
  border: 1px solid #888;
  background: #e8e8e8;
}

.center-title {
  flex: none;
  height: 24px;
  padding-left: 5px;
  line-height: 24px;
  background: linear-gradient(#dedede, #c5c5c5);
  border-bottom: 1px solid #888;
}

.tiles {
  display: flex;
  flex: none;
  gap: 3px;
  padding: 12px 12px 0;
}

.tile {
  position: relative;
  display: flex;
  flex-direction: column;
  align-items: center;
  gap: 7px;
  width: 60px;
  height: 60px;
  padding-top: 6px;
  color: #fff;
  background: #949494;
}

.tile svg {
  width: 30px;
  height: 32px;
}

.tile.selected {
  outline: 2px solid #fff;
}

.tile .corner {
  position: absolute;
  top: 0;
  right: 0;
  width: 40px;
  height: 40px;
}

.tile .badge {
  position: absolute;
  left: -3px;
  top: -10px;
}

.center-links {
  display: flex;
  flex: none;
  justify-content: space-between;
  padding: 19px 7px 5px 6px;
}

.center-links a {
  font-size: 12px;
  line-height: 15px;
  color: #2355b0;
}

.feed {
  display: flex;
  flex: 1;
  min-height: 0;
  margin: 0 3px 2px 2px;
}

.messages {
  flex: 1;
  overflow: hidden;
  background: #d8e4f1;
}

.message {
  position: relative;
  display: flex;
  align-items: center;
  height: 181px;
  padding: 3px 5px 0 4px;
  border-bottom: 1px solid #c5d1df;
}

.message.current {
  color: #fff;
  background: #316ac5;
  box-shadow: inset 0 0 0 5px #d25144;
}

.err {
  width: 16px;
  height: 16px;
}

.message p {
  width: 267px;
  margin-left: 7px;
  white-space: pre;
}

.message time {
  font-weight: bold;
}

.dismiss {
  position: absolute;
  right: 5px;
  top: 14px;
}

.dismiss svg {
  width: 13px;
  height: 13px;
}

.vscroll {
  display: flex;
  flex-direction: column;
  width: 17px;
  border: 1px solid #bbb;
  background: linear-gradient(90deg, #d2d2d2, #eee);
}

.vscroll button {
  height: 16px;
}

.vtrack {
  flex: 1;
}

.vthumb {
  width: 14px;
  height: 15px;
  margin-top: 1px;
  border: 1px solid #555;
  border-radius: 50%;
  background: linear-gradient(90deg, #4a9bee, #a6e3ff);
}

/* Status bar */
.statusbar {
  display: flex;
  flex: none;
  align-items: center;
  height: 28px;
  padding: 0 11px 0 24px;
  background: linear-gradient(#bdbdbd, #989898);
}

.services {
  display: flex;
  align-items: center;
  gap: 6px;
  margin-left: auto;
  padding-right: 8px;
  border-right: 1px solid #555;
  line-height: 18px;
}

.services svg {
  width: 14px;
  height: 16px;
}

.server {
  padding-left: 8px;
}

/* Windows taskbar */
.taskbar {
  display: flex;
  flex: none;
  height: 40px;
  color: #fff;
  font-family: var(--win);
  background: #1c1c1c;
}

.start {
  width: 48px;
  display: grid;
  place-items: center;
}

.start svg {
  width: 16px;
  height: 16px;
}

.task-search {
  display: flex;
  align-items: center;
  width: 288px;
  padding: 0 10px 0 12px;
  color: #222;
  background: #f2f2f2;
  border: 1px solid #bbb;
}

.task-search input {
  flex: 1;
  min-width: 0;
  padding-left: 11px;
  font-size: 14px;
}

.lens {
  width: 16px;
  height: 16px;
}

.spark {
  width: 60px;
  height: 30px;
}

.apps {
  display: flex;
  gap: 1px;
  padding-left: 2px;
}

.app {
  display: grid;
  place-items: center;
  width: 48px;
}

.app svg {
  width: 24px;
  height: 24px;
}

.app.view {
  padding-right: 2px;
}

.app.view svg {
  width: 17px;
  height: 17px;
}

.app.open {
  background: linear-gradient(#76b9ed, #76b9ed) bottom / 40px 2px no-repeat;
}

.app.focused {
  background: linear-gradient(#76b9ed, #76b9ed) bottom / 100% 2px no-repeat, #484848;
}

.tray {
  display: flex;
  align-items: center;
  gap: 9px;
  margin-left: auto;
  padding-right: 25px;
  font-size: 12px;
}

.tray svg {
  width: 16px;
  height: 16px;
}

.tray > span {
  margin-left: 2px;
}

.clock {
  display: flex;
  flex-direction: column;
  align-items: center;
  width: 66px;
  font-size: 11px;
  line-height: 18px;
}

.note {
  margin-left: 5px;
}
```
